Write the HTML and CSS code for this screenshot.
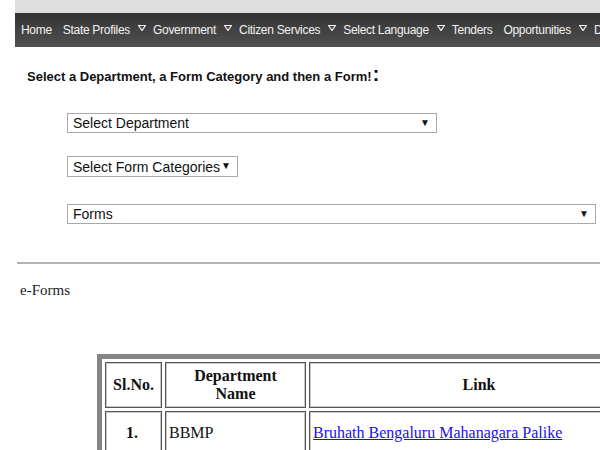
FILE: index.html
```html
<!DOCTYPE html>
<html lang="en">
<head>
    <meta charset="UTF-8">
    <title>e-Forms</title>
    <link rel="stylesheet" href="styles.css">
</head>
<body>
    <div class="page">
        <div class="top-strip"></div>

        <nav class="menu">
            <a class="menu-item" href="#">Home</a>
            <a class="menu-item has-sub" href="#">State Profiles<svg class="caret" viewBox="0 0 8 6"><polygon points="0.5,0.5 7.5,0.5 4,5.5"/></svg></a>
            <a class="menu-item has-sub" href="#">Government<svg class="caret" viewBox="0 0 8 6"><polygon points="0.5,0.5 7.5,0.5 4,5.5"/></svg></a>
            <a class="menu-item has-sub" href="#">Citizen Services<svg class="caret" viewBox="0 0 8 6"><polygon points="0.5,0.5 7.5,0.5 4,5.5"/></svg></a>
            <a class="menu-item has-sub" href="#">Select Language<svg class="caret" viewBox="0 0 8 6"><polygon points="0.5,0.5 7.5,0.5 4,5.5"/></svg></a>
            <a class="menu-item" href="#">Tenders</a>
            <a class="menu-item has-sub" href="#">Opportunities<svg class="caret" viewBox="0 0 8 6"><polygon points="0.5,0.5 7.5,0.5 4,5.5"/></svg></a>
            <a class="menu-item" href="#">Downloads</a>
        </nav>

        <section class="chooser">
            <h3 class="chooser-title">Select a Department, a Form Category and then a Form!<span class="big-colon">:</span></h3>

            <div class="pick pick-dept">
                <select><option>Select Department</option></select>
                <span class="pick-arrow">&#9660;</span>
            </div>

            <div class="pick pick-cat">
                <select><option>Select Form Categories</option></select>
                <span class="pick-arrow">&#9660;</span>
            </div>

            <div class="pick pick-form">
                <select><option>Forms</option></select>
                <span class="pick-arrow">&#9660;</span>
            </div>
        </section>

        <hr class="divider">

        <p class="eforms-label">e-Forms</p>

        <table class="forms-table">
            <tr>
                <th class="col-no">Sl.No.</th>
                <th class="col-dept">Department<br>Name</th>
                <th class="col-link">Link</th>
            </tr>
            <tr>
                <td class="num">1.</td>
                <td>BBMP</td>
                <td><a href="#">Bruhath Bengaluru Mahanagara Palike</a></td>
            </tr>
        </table>
    </div>
</body>
</html>
```

FILE: styles.css
```css
/* reset-ish */
html, body {
    margin: 0;
    padding: 0;
    overflow: hidden;
    background: #fff;
}

.page {
    margin-left: 15px;
    width: 660px;
}

.top-strip {
    height: 13px;
    background: #dedede;
}

/* top navigation */
.menu {
    height: 34px;
    display: flex;
    align-items: center;
    padding-left: 6px;
    background: linear-gradient(#333333, #505050);
    white-space: nowrap;
    font-family: "Liberation Sans", Arial, sans-serif;
    font-size: 12px;
    letter-spacing: -0.3px;
}

.menu-item {
    display: flex;
    align-items: center;
    color: #f2f2f2;
    text-decoration: none;
    margin-right: 11px;
}

.menu-item.has-sub {
    margin-right: 7px;
}

.caret {
    width: 8px;
    height: 6px;
    margin-left: 8px;
    margin-top: -5px;
    fill: #444;
    stroke: #f4f4f4;
    stroke-width: 1.2;
}

/* department / form picker */
.chooser {
    padding-left: 12px;
}

.chooser-title {
    margin: 20px 0 0;
    font-family: "Liberation Sans", Arial, sans-serif;
    font-size: 13px;
    font-weight: bold;
    color: #111;
}

.big-colon {
    font-size: 21px;
    line-height: 13px;
    margin-left: 1px;
}

.pick {
    position: relative;
    margin-left: 40px;
    height: 20px;
}

.pick select {
    -webkit-appearance: none;
    appearance: none;
    width: 100%;
    height: 100%;
    margin: 0;
    padding: 0 0 0 5px;
    border: 1px solid #a9a9a9;
    border-radius: 0;
    background: #fff;
    color: #111;
    font-family: "Liberation Sans", Arial, sans-serif;
    font-size: 14px;
    outline: none;
}

.pick-arrow {
    position: absolute;
    right: 7px;
    top: 4px;
    font-size: 10px;
    color: #111;
    pointer-events: none;
}

.pick-dept {
    width: 370px;
    margin-top: 29px;
}

.pick-cat {
    width: 171px;
    height: 21px;
    margin-top: 23px;
}

.pick-form {
    width: 529px;
    margin-top: 27px;
}

.divider {
    margin: 38px 0 0 2px;
    border: none;
    border-top: 2px solid #b4b4b4;
}

.eforms-label {
    margin: 18px 0 0 5px;
    font-family: "Liberation Serif", "Times New Roman", serif;
    font-size: 15px;
    color: #222;
}

/* e-forms table */
.forms-table {
    margin: 55px 0 0 82px;
    width: 560px;
    table-layout: fixed;
    border: 5px solid #858585;
    border-spacing: 3px;
    font-family: "Liberation Serif", "Times New Roman", serif;
    font-size: 16px;
    color: #111;
}

.forms-table th,
.forms-table td {
    border: 1px solid #555;
    box-shadow: inset 0 0 0 1px #c8c8c8;
    padding: 4px 6px;
}

.forms-table th {
    height: 36px;
    line-height: 18px;
}

.col-no {
    width: 43px;
}

.col-dept {
    width: 127px;
    padding: 4px 6px;
}

.forms-table td {
    height: 34px;
    padding-left: 3px;
}

.forms-table td.num {
    text-align: center;
    font-weight: bold;
}

.forms-table a {
    color: #1a0dff;
}
```
